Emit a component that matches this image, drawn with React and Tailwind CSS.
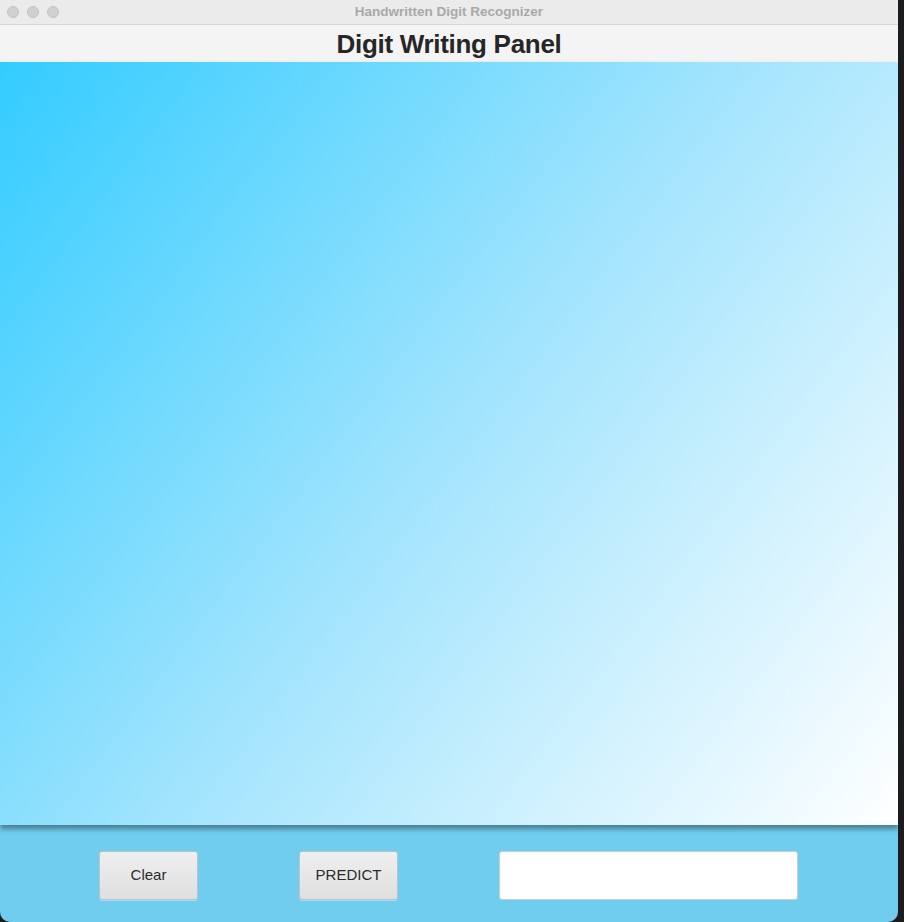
import React, { useState } from "react";

const font = { fontFamily: '"Liberation Sans", Arial, sans-serif' };

const TrafficLights = () => (
  <div className="flex items-center gap-2 pl-[7px]">
    {[0, 1, 2].map((i) => (
      <span
        key={i}
        className="w-3 h-3 rounded-full bg-[#d0d0d0] border border-[#c4c4c4]"
      />
    ))}
  </div>
);

const FxButton = ({ children, onClick }) => (
  <button
    onClick={onClick}
    className="w-[99px] h-[49px] rounded-[3px] border border-[#b9c3c8] bg-linear-to-b from-[#efefef] to-[#dfdfdf] text-[15px] text-[#2b2b2b] shadow-[0_1px_0_rgba(255,255,255,0.35)]"
  >
    {children}
  </button>
);

export default function App() {
  const [result, setResult] = useState("");

  return (
    <div className="flex h-[922px] w-[904px] bg-[#1c1c1e]" style={font}>
      <div className="flex flex-col w-[898px] rounded-b-[10px] overflow-hidden">
        {/* title bar */}
        <div className="relative flex items-center h-[25px] shrink-0 bg-[#ebebeb] border-b border-[#d7d7d7]">
          <TrafficLights />
          <div className="absolute inset-0 flex items-center justify-center text-[13.5px] font-bold text-[#a9a9a9]">
            Handwritten Digit Recognizer
          </div>
        </div>

        {/* header */}
        <div className="flex items-center justify-center h-[37px] shrink-0 bg-[#f4f4f4]">
          <h1 className="text-[26px] font-bold text-[#262626] tracking-[-0.3px] leading-none">
            Digit Writing Panel
          </h1>
        </div>

        {/* drawing canvas */}
        <div className="relative z-10 h-[763px] shrink-0 bg-linear-[127deg] from-[#33ccff] via-[#a2e4fd] to-white shadow-[0_4px_5px_rgba(40,60,70,0.55)]" />

        {/* controls */}
        <div className="flex flex-1 items-start gap-[101px] pt-[26px] pl-[99px] bg-[#70cdee]">
          <FxButton onClick={() => setResult("")}>Clear</FxButton>
          <FxButton onClick={() => setResult("")}>PREDICT</FxButton>
          <input
            value={result}
            onChange={(e) => setResult(e.target.value)}
            className="w-[299px] h-[49px] rounded-[3px] border border-[#c3cfd4] bg-white px-2 text-[15px] outline-none"
          />
        </div>
      </div>
    </div>
  );
}
